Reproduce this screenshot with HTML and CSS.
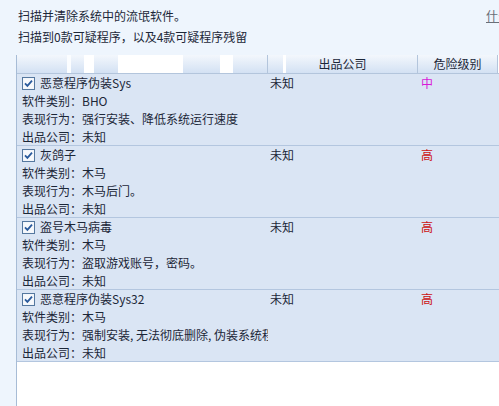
FILE: index.html
```html
<!DOCTYPE html>
<html lang="zh-CN">
<head>
<meta charset="utf-8">
<title>流氓软件扫描</title>
<link rel="stylesheet" href="styles.css">
</head>
<body>
<div class="page">
  <div class="intro">
    <div class="intro-row">
      <span class="intro-text">扫描并清除系统中的流氓软件。</span>
      <a class="help" href="#">什么是流氓软件</a>
    </div>
    <div class="intro-row">
      <span class="intro-text">扫描到0款可疑程序，以及4款可疑程序残留</span>
    </div>
  </div>
  <div class="list">
    <div class="head">
      <div class="h h1"></div>
      <div class="h h2">出品公司</div>
      <div class="h h3">危险级别</div>
    </div>

    <div class="row">
      <div class="c c1">
        <div class="name"><svg class="cb" viewBox="0 0 13 13"><rect x="0.5" y="0.5" width="12" height="12" fill="#eef3fa" stroke="#55789f"/><rect x="1.5" y="1.5" width="10" height="10" fill="#f7f9fc"/><path d="M3 6.3 L5.4 8.8 L10 3.6" fill="none" stroke="#2a5a9c" stroke-width="1.8"/></svg>恶意程序伪装Sys</div>
        <div>软件类别：BHO</div>
        <div>表现行为：强行安装、降低系统运行速度</div>
        <div>出品公司：未知</div>
      </div>
      <div class="c c2">未知</div>
      <div class="c c3 mid">中</div>
    </div>

    <div class="row">
      <div class="c c1">
        <div class="name"><svg class="cb" viewBox="0 0 13 13"><rect x="0.5" y="0.5" width="12" height="12" fill="#eef3fa" stroke="#55789f"/><rect x="1.5" y="1.5" width="10" height="10" fill="#f7f9fc"/><path d="M3 6.3 L5.4 8.8 L10 3.6" fill="none" stroke="#2a5a9c" stroke-width="1.8"/></svg>灰鸽子</div>
        <div>软件类别：木马</div>
        <div>表现行为：木马后门。</div>
        <div>出品公司：未知</div>
      </div>
      <div class="c c2">未知</div>
      <div class="c c3 high">高</div>
    </div>

    <div class="row">
      <div class="c c1">
        <div class="name"><svg class="cb" viewBox="0 0 13 13"><rect x="0.5" y="0.5" width="12" height="12" fill="#eef3fa" stroke="#55789f"/><rect x="1.5" y="1.5" width="10" height="10" fill="#f7f9fc"/><path d="M3 6.3 L5.4 8.8 L10 3.6" fill="none" stroke="#2a5a9c" stroke-width="1.8"/></svg>盗号木马病毒</div>
        <div>软件类别：木马</div>
        <div>表现行为：盗取游戏账号，密码。</div>
        <div>出品公司：未知</div>
      </div>
      <div class="c c2">未知</div>
      <div class="c c3 high">高</div>
    </div>

    <div class="row">
      <div class="c c1">
        <div class="name"><svg class="cb" viewBox="0 0 13 13"><rect x="0.5" y="0.5" width="12" height="12" fill="#eef3fa" stroke="#55789f"/><rect x="1.5" y="1.5" width="10" height="10" fill="#f7f9fc"/><path d="M3 6.3 L5.4 8.8 L10 3.6" fill="none" stroke="#2a5a9c" stroke-width="1.8"/></svg>恶意程序伪装Sys32</div>
        <div>软件类别：木马</div>
        <div>表现行为：强制安装, 无法彻底删除, 伪装系统程序</div>
        <div>出品公司：未知</div>
      </div>
      <div class="c c2">未知</div>
      <div class="c c3 high">高</div>
    </div>
  </div>
</div>
</body>
</html>
```

FILE: styles.css
```css
* { box-sizing: border-box; }
html, body { margin: 0; padding: 0; }
body {
  width: 499px;
  height: 406px;
  overflow: hidden;
  background: #eef5fd;
  font-family: "Noto Sans CJK SC", "Noto Sans", sans-serif;
  font-size: 12px;
  color: #1c2738;
}
.page {
  display: flex;
  flex-direction: column;
  height: 406px;
}
.intro {
  padding: 5px 0 0 18px;
  line-height: 21px;
}
.intro-row {
  display: flex;
  white-space: nowrap;
}
.intro-text { width: 468px; flex-shrink: 0; }
.help {
  color: #6a6f78;
  text-decoration: underline;
  flex-shrink: 0;
}
.list {
  margin: 8px 0 0 16px;
  flex: 1;
  background: #fff;
  border-left: 1px solid #a7bcd6;
  width: 483px;
}
.head {
  display: grid;
  grid-template-columns: 251px 150px 80px;
  height: 19px;
  border-bottom: 1px solid #b3c5dc;
}
.h {
  height: 18px;
  line-height: 18px;
  text-align: center;
  border-right: 1px solid #b3c5dc;
  color: #1c2738;
  background: linear-gradient(#f3f7fc, #d3e1f3);
}
.h1 {
  background:
    linear-gradient(#fbfdff, #fbfdff) 50px 0 / 4px 100% no-repeat,
    linear-gradient(#ffffff, #ffffff) 67px 0 / 10px 100% no-repeat,
    linear-gradient(#ffffff, #ffffff) 101px 0 / 65px 100% no-repeat,
    linear-gradient(#ffffff, #ffffff) 203px 0 / 13px 100% no-repeat,
    linear-gradient(#f3f7fc, #d3e1f3);
}
.h2 {
  background:
    linear-gradient(#ffffff, #ffffff) 15px 0 / 3px 100% no-repeat,
    linear-gradient(#f3f7fc, #d3e1f3);
}
.row {
  display: grid;
  grid-template-columns: 251px 150px 80px;
  height: 72px;
  background: #dae5f4;
  border-bottom: 1px solid #b3c6df;
}
.c {
  height: 71px;
  overflow: hidden;
  line-height: 18px;
  white-space: nowrap;
}
.c1 { padding-left: 5px; }
.c2 { padding-left: 2px; }
.c3 { padding-left: 3px; }
.name {
  display: flex;
  align-items: center;
}
.cb {
  width: 13px;
  height: 13px;
  margin-right: 5px;
  flex-shrink: 0;
}
.mid { color: #d81bd8; }
.high { color: #cc1111; }
```
